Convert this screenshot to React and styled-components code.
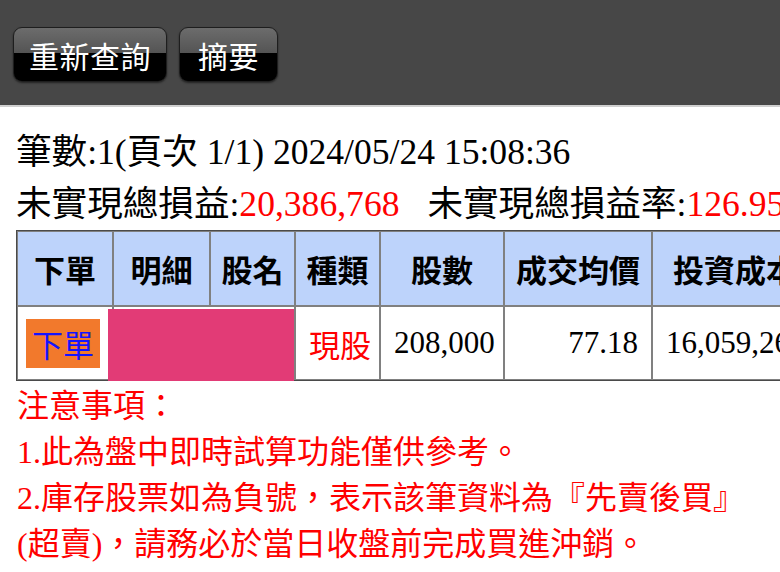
import React from 'react';
import styled, { createGlobalStyle } from 'styled-components';

const GlobalStyle = createGlobalStyle`
  html, body {
    margin: 0;
    padding: 0;
    background: #fff;
    overflow: hidden;
  }
  * {
    box-sizing: border-box;
  }
`;

const Page = styled.div`
  width: 780px;
  height: 572px;
  overflow: hidden;
  font-family: "Liberation Serif", "Noto Sans CJK TC", serif;
`;

const TopBar = styled.div`
  height: 107px;
  background: #474747;
  border-bottom: 2px solid #cfcfcf;
  display: flex;
  align-items: flex-start;
  gap: 12px;
  padding: 27px 0 0 13px;
`;

const BarButton = styled.button`
  height: 55px;
  padding: 0 ${(p) => p.$pad || 15}px;
  border: 1px solid #1e1e1e;
  border-radius: 9px;
  background: linear-gradient(#6c6c6c 0%, #545454 47%, #000 48%, #000 100%);
  box-shadow: 0 1px 2px rgba(0, 0, 0, 0.5);
  color: #fff;
  font-family: "Noto Sans CJK TC", sans-serif;
  font-size: 30px;
  line-height: 1;
  letter-spacing: 0.5px;
  cursor: pointer;
`;

const Content = styled.div`
  padding: 19px 0 0 16px;
`;

const InfoLine = styled.div`
  font-size: 35.6px;
  line-height: 52px;
  color: #000;
  white-space: nowrap;
`;

const Stat = styled.span`
  margin-left: ${(p) => p.$gap || 0}px;
`;

const Red = styled.span`
  color: #ff0000;
`;

const TableWrap = styled.div`
  width: 100%;
  overflow: hidden;
`;

const Table = styled.table`
  table-layout: fixed;
  width: 803px;
  border-collapse: separate;
  border-spacing: 0;
  border: 1px solid #4a4a4a;
  font-size: 31px;
`;

const Col = styled.col`
  width: ${(p) => p.$w}px;
`;

const Th = styled.th`
  height: 75px;
  padding: 0 6px;
  background: #bdd3fb;
  border: 1px solid #808080;
  font-family: "Noto Sans CJK TC", sans-serif;
  font-weight: 700;
  text-align: center;
  vertical-align: middle;
  white-space: nowrap;
  overflow: hidden;
`;

const Td = styled.td`
  position: relative;
  height: 74px;
  padding: ${(p) => p.$pad || '0 13px'};
  border: 1px solid #808080;
  text-align: ${(p) => p.$align || 'center'};
  vertical-align: middle;
  white-space: nowrap;
  overflow: visible;
  color: ${(p) => p.$color || '#000'};
`;

const OrderLink = styled.a`
  display: inline-block;
  padding: 8px 6px;
  line-height: 33px;
  background: #f2792c;
  color: #1414ff;
  font-family: "Noto Sans CJK TC", sans-serif;
  text-decoration: none;
`;

const Redaction = styled.div`
  position: absolute;
  left: -6px;
  top: 2px;
  right: 0;
  bottom: -2px;
  background: #e23b76;
`;

const Sans = styled.span`
  font-family: "Noto Sans CJK TC", sans-serif;
`;

const Notes = styled.div`
  color: #ff0000;
  font-size: 32px;
  line-height: 46px;
  padding: 2px 0 0 1px;
  white-space: nowrap;
`;

const columns = [
  { label: '下單', w: 96 },
  { label: '明細', w: 97 },
  { label: '股名', w: 85 },
  { label: '種類', w: 85 },
  { label: '股數', w: 124 },
  { label: '成交均價', w: 148 },
  { label: '投資成本', w: 166 },
];

const notes = [
  '注意事項：',
  '1.此為盤中即時試算功能僅供參考。',
  '2.庫存股票如為負號，表示該筆資料為『先賣後買』',
  '(超賣)，請務必於當日收盤前完成買進沖銷。',
];

const App = () => {
  return (
    <Page>
      <GlobalStyle />
      <TopBar>
        <BarButton>重新查詢</BarButton>
        <BarButton $pad={18}>摘要</BarButton>
      </TopBar>
      <Content>
        <InfoLine>筆數:1(頁次 1/1) 2024/05/24 15:08:36</InfoLine>
        <InfoLine>
          <Stat>
            未實現總損益:<Red>20,386,768</Red>
          </Stat>
          <Stat $gap={28}>
            未實現總損益率:<Red>126.95%</Red>
          </Stat>
        </InfoLine>
        <TableWrap>
          <Table>
            <colgroup>
              {columns.map((c) => (
                <Col key={c.label} $w={c.w} />
              ))}
            </colgroup>
            <thead>
              <tr>
                {columns.map((c) => (
                  <Th key={c.label}>{c.label}</Th>
                ))}
              </tr>
            </thead>
            <tbody>
              <tr>
                <Td $pad="0 10px 0 6px">
                  <OrderLink href="#">下單</OrderLink>
                </Td>
                <Td colSpan={2}>
                  <Redaction />
                </Td>
                <Td $color="#ff0000">
                  <Sans>現股</Sans>
                </Td>
                <Td $align="right">208,000</Td>
                <Td $align="right">77.18</Td>
                <Td $align="right">16,059,264</Td>
              </tr>
            </tbody>
          </Table>
        </TableWrap>
        <Notes>
          {notes.map((n) => (
            <div key={n}>{n}</div>
          ))}
        </Notes>
      </Content>
    </Page>
  );
};

export default App;
